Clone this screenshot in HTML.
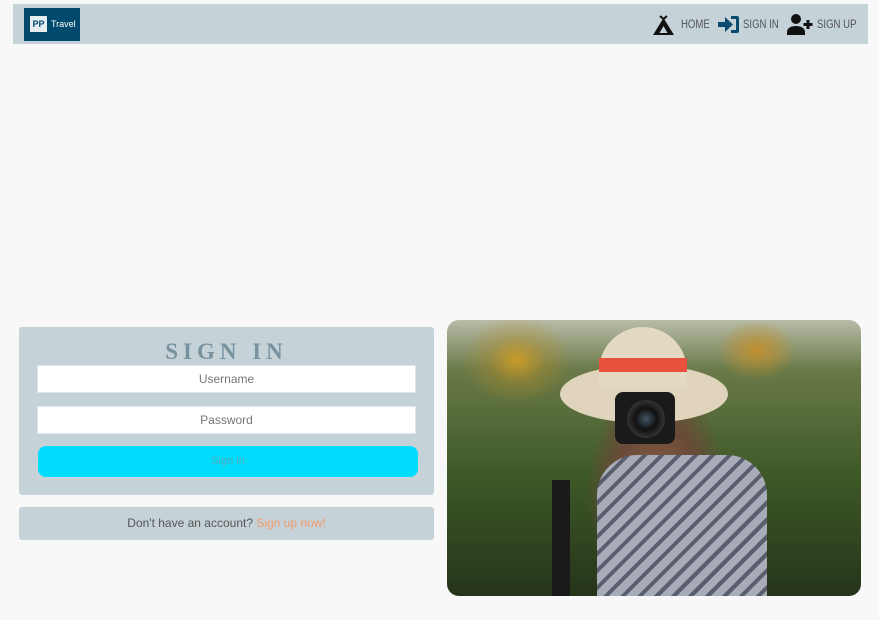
<!DOCTYPE html>
<html><head><style>
body{margin:0;background:#f8f8f8;width:879px;height:620px;position:relative;overflow:hidden;font-family:"Liberation Sans",sans-serif}
.nav{position:absolute;left:13px;top:4px;width:855px;height:40px;background:#c5d3d8}
.logo{position:absolute;left:11px;top:4px;width:56px;height:33px;background:#014a6e}
.logo .pp{position:absolute;left:6px;top:8px;width:17px;height:16px;background:#e6eef2;font:bold 9px/16px "Liberation Sans Narrow","Liberation Sans",sans-serif;color:#014a6e;text-align:center}
.logo .tr{position:absolute;left:27px;top:8px;font:9px/16px "Liberation Sans Narrow",sans-serif;color:#fff}
.item{position:absolute;top:12px;font:12px/16px "Liberation Sans Narrow","Liberation Sans",sans-serif;color:#555;transform:scaleX(.8);transform-origin:left;white-space:nowrap}
.card{position:absolute;left:19px;width:415px;background:#c5d3d8;border-radius:3px}
h1{position:absolute;left:0;right:0;top:340px;margin:0;text-align:center;font:bold 23px/24px "Liberation Serif",serif;letter-spacing:5px;color:#7892a0}
.inp{position:absolute;left:37px;width:379px;height:28px;background:#fff;border:1px solid #dfe6ea;box-sizing:border-box;text-align:center;font:12px/27px "Liberation Sans",sans-serif;color:#777}
.btn{position:absolute;left:38px;top:446px;width:380px;height:31px;background:#00dcfc;border-radius:8px;text-align:center;font:11px/31px "Liberation Sans",sans-serif;color:#5ab}
.photo{position:absolute;left:447px;top:320px;width:414px;height:276px;border-radius:12px;overflow:hidden;
background:
radial-gradient(ellipse 40px 30px at 310px 30px,#c09030 0,transparent 100%),
radial-gradient(ellipse 55px 45px at 70px 40px,#c89a28 0,rgba(180,140,40,.4) 50%,transparent 100%),
linear-gradient(180deg,#b8bca8 0,#6a7a48 18%,#3f5a28 55%,#26341a 100%)}
</style></head><body>
<div class="nav">
 <div class="logo"><div class="pp">PP</div><div class="tr">Travel</div></div>
 <svg style="position:absolute;left:638px;top:9px" width="25" height="23" viewBox="0 0 25 23"><path d="M12.5 5L2 22h21z" fill="#111"/><path d="M9 3l3.5 3 3.5-3" stroke="#111" stroke-width="2" fill="none"/><path d="M12.5 13l-4 7h8z" fill="#c5d3d8"/></svg>
 <div class="item" style="left:668px">HOME</div>
 <svg style="position:absolute;left:705px;top:11px" width="22" height="19" viewBox="0 0 22 19"><path d="M0 7h7V2l8 7.5-8 7.5v-5H0z" fill="#0a4a6e"/><path d="M13 1h6a2 2 0 0 1 2 2v13a2 2 0 0 1-2 2h-6v-3h5V4h-5z" fill="#0a4a6e"/></svg>
 <div class="item" style="left:730px">SIGN IN</div>
 <svg style="position:absolute;left:774px;top:10px" width="26" height="21" viewBox="0 0 26 21"><circle cx="9" cy="5" r="5" fill="#111"/><path d="M0 21v-3c0-4 4-6 9-6s9 2 9 6v3z" fill="#111"/><path d="M21 6v9M16.5 10.5h9" stroke="#111" stroke-width="3"/></svg>
 <div class="item" style="left:804px">SIGN UP</div>
</div>
<div class="card" style="top:327px;height:168px"></div>
<h1 style="width:453px">SIGN IN</h1>
<div class="inp" style="top:365px">Username</div>
<div class="inp" style="top:406px">Password</div>
<div class="btn">Sign in</div>
<div class="card" style="top:507px;height:33px;text-align:center;font:12px/33px 'Liberation Sans',sans-serif;color:#555">Don't have an account? <span style="color:#f39a6b">Sign up now!</span></div>
<div class="photo">
 <div style="position:absolute;left:135px;top:60px;width:150px;height:216px;background:radial-gradient(ellipse 70px 110px at 75px 110px,#8a6048 0,#6a4a38 60%,transparent 100%)"></div>
 <div style="position:absolute;left:150px;top:135px;width:170px;height:141px;border-radius:40px 40px 0 0;background:repeating-linear-gradient(135deg,#a8acb8 0 8px,#5a5e6e 8px 12px)"></div>
 <div style="position:absolute;left:113px;top:45px;width:168px;height:58px;border-radius:50%;background:#e0d4bc"></div>
 <div style="position:absolute;left:152px;top:7px;width:88px;height:60px;border-radius:45px 45px 4px 4px;background:#e4d9c2"></div>
 <div style="position:absolute;left:152px;top:38px;width:88px;height:14px;background:#e8513e"></div>
 <div style="position:absolute;left:168px;top:72px;width:60px;height:52px;border-radius:8px;background:#1a1a1a"></div>
 <div style="position:absolute;left:180px;top:80px;width:38px;height:38px;border-radius:50%;background:radial-gradient(circle,#456 0,#111 40%,#333 70%,#111 100%)"></div>
 <div style="position:absolute;left:105px;top:160px;width:18px;height:116px;background:#1a1a1a"></div>
</div>
</body></html>
